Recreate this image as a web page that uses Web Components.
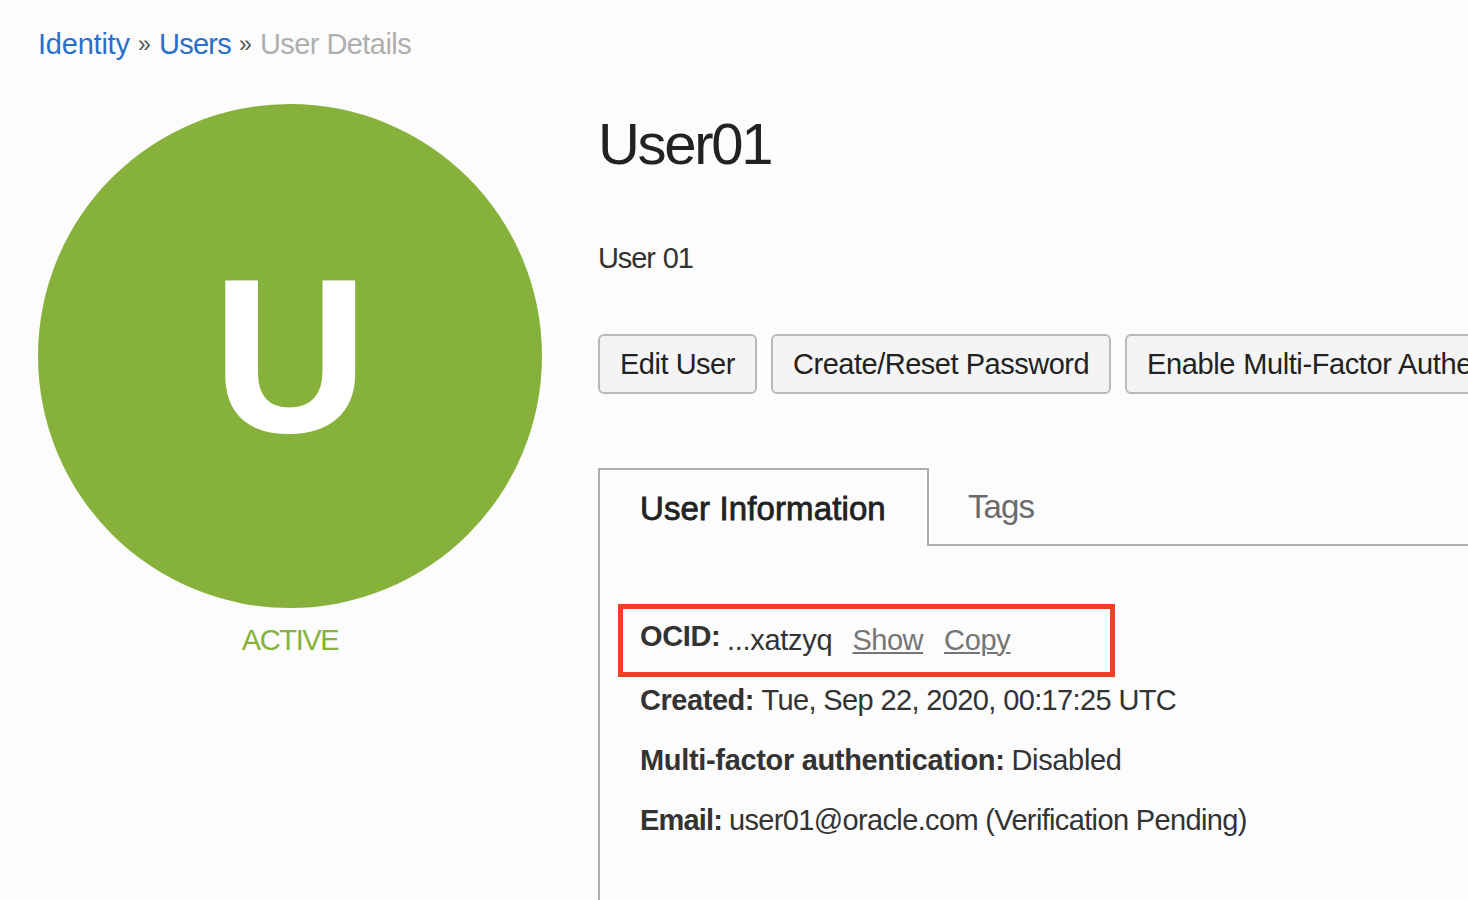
<!DOCTYPE html>
<html lang="en">
<head>
<meta charset="utf-8">
<title>User Details</title>
<style>
html, body { margin: 0; height: 100%; overflow: hidden; background: #fcfcfc; }
body { font: 29px/40px "Liberation Sans", Arial, sans-serif; color: #333; }
</style>
</head>
<body>
<user-details-page></user-details-page>
<script>
function define(name, html) {
  const template = document.createElement('template');
  template.innerHTML = html;
  customElements.define(name, class extends HTMLElement {
    constructor() {
      super();
      this.attachShadow({ mode: 'open' }).append(template.content.cloneNode(true));
    }
  });
}

define('bread-crumbs', `
<style>
:host { display: flex; height: 40px; white-space: nowrap; }
a { color: #2a70c8; text-decoration: none; }
.home { width: 92px; letter-spacing: -.22px; }
.users { width: 72px; letter-spacing: -.75px; }
.sep { width: 29px; text-align: center; font-size: 23px; line-height: 41px; color: #555; }
.here { color: #afafaf; letter-spacing: -.57px; }
</style>
<a class="home">Identity</a><span class="sep">»</span><a class="users">Users</a><span class="sep">»</span><span class="here">User Details</span>`);

define('status-avatar', `
<style>
:host { display: flex; flex-direction: column; align-items: center; width: 504px; }
.disc { display: grid; place-items: center; width: 504px; height: 504px; border-radius: 50%; background: #86b23b; color: #fff; font-weight: bold; font-size: 217px; line-height: 240px; }
.letter { transform: scaleX(.98); -webkit-text-stroke: 2px #fff; }
.state { margin-top: 12px; color: #86b23b; letter-spacing: -1.4px; }
</style>
<div class="disc"><div class="letter"><slot></slot></div></div><div class="state"><slot name="state"></slot></div>`);

define('action-button', `
<style>
:host { display: block; flex: none; }
button { display: block; box-sizing: border-box; height: 60px; width: var(--w, auto); padding: 0 20px; border: 2px solid #b5bac0; border-radius: 6px; background: #f4f4f4; color: #222; font: inherit; line-height: 56px; letter-spacing: var(--track, -.48px); word-spacing: var(--gap, 0); white-space: nowrap; text-align: left; }
</style>
<button><slot></slot></button>`);

define('tab-strip', `
<style>
:host { display: flex; height: 78px; font-size: 33px; white-space: nowrap; }
.on { box-sizing: border-box; width: 331px; padding: 19px 0 0 40px; border: 2px solid #aeaeae; border-bottom: 0; color: #222; letter-spacing: .12px; -webkit-text-stroke: .8px #222; }
.off { box-sizing: border-box; flex: 1; padding: 19px 0 0 39px; border-bottom: 2px solid #aeaeae; color: #6b6b6b; letter-spacing: -.9px; }
</style>
<div class="on"><slot name="current"></slot></div><div class="off"><slot></slot></div>`);

define('info-row', `
<style>
:host { display: flex; height: 60px; line-height: 60px; white-space: nowrap; }
b { width: var(--label); letter-spacing: var(--label-track); }
span { letter-spacing: var(--track); }
</style>
<b><slot name="label"></slot></b><span><slot></slot></span>`);

define('ocid-row', `
<style>
:host { display: flex; position: relative; height: 64px; line-height: 60px; white-space: nowrap; }
b { width: 87px; letter-spacing: -.35px; }
.value { width: 125.5px; letter-spacing: -.3px; }
.value, .show, .copy { padding-top: 4px; }
a { color: #757575; text-decoration: underline; text-decoration-thickness: 2px; text-underline-offset: 2px; }
.show { width: 91.5px; letter-spacing: -.5px; }
.copy { letter-spacing: -.3px; }
.mark { position: absolute; left: -22.5px; top: -2px; box-sizing: border-box; width: 497px; height: 73px; border: 5px solid #ee4025; }
</style>
<b>OCID:</b><span class="value">...xatzyq</span><span class="show"><a>Show</a></span><span class="copy"><a>Copy</a></span><div class="mark"></div>`);

define('user-details-page', `
<style>
:host { display: block; box-sizing: border-box; width: 1468px; height: 900px; padding: 24px 0 0 38px; overflow: hidden; }
.columns { display: grid; grid-template-columns: 504px 870px; column-gap: 56px; margin-top: 40px; }
h1 { margin: 10px 0 0; height: 60px; font-size: 58px; line-height: 60px; font-weight: normal; letter-spacing: -2.3px; color: #222; }
p { margin: 64px 0 0; letter-spacing: -1.1px; word-spacing: 1px; }
.actions { display: flex; gap: 14px; margin: 56px 0 74px; }
.panel { box-sizing: border-box; height: 360px; padding: 60px 0 0 40px; border-left: 2px solid #aeaeae; }
</style>
<bread-crumbs></bread-crumbs>
<div class="columns">
<status-avatar>U<span slot="state">ACTIVE</span></status-avatar>
<main>
<h1>User01</h1>
<p>User 01</p>
<div class="actions">
<action-button style="--w:159px">Edit User</action-button>
<action-button style="--w:340px">Create/Reset Password</action-button>
<action-button style="--track:-.4px;--gap:.6px">Enable Multi-Factor Authentication</action-button>
</div>
<tab-strip><span slot="current">User Information</span>Tags</tab-strip>
<div class="panel">
<ocid-row></ocid-row>
<info-row style="--label:121.5px;--label-track:-.45px;--track:-.63px"><span slot="label">Created:</span>Tue, Sep 22, 2020, 00:17:25 UTC</info-row>
<info-row style="--label:371.5px;--label-track:-.33px;--track:-.35px"><span slot="label">Multi-factor authentication:</span>Disabled</info-row>
<info-row style="--label:89px;--label-track:-.8px;--track:-.65px"><span slot="label">Email:</span>user01@oracle.com (Verification Pending)</info-row>
</div>
</main>
</div>`);
</script>
</body>
</html>
